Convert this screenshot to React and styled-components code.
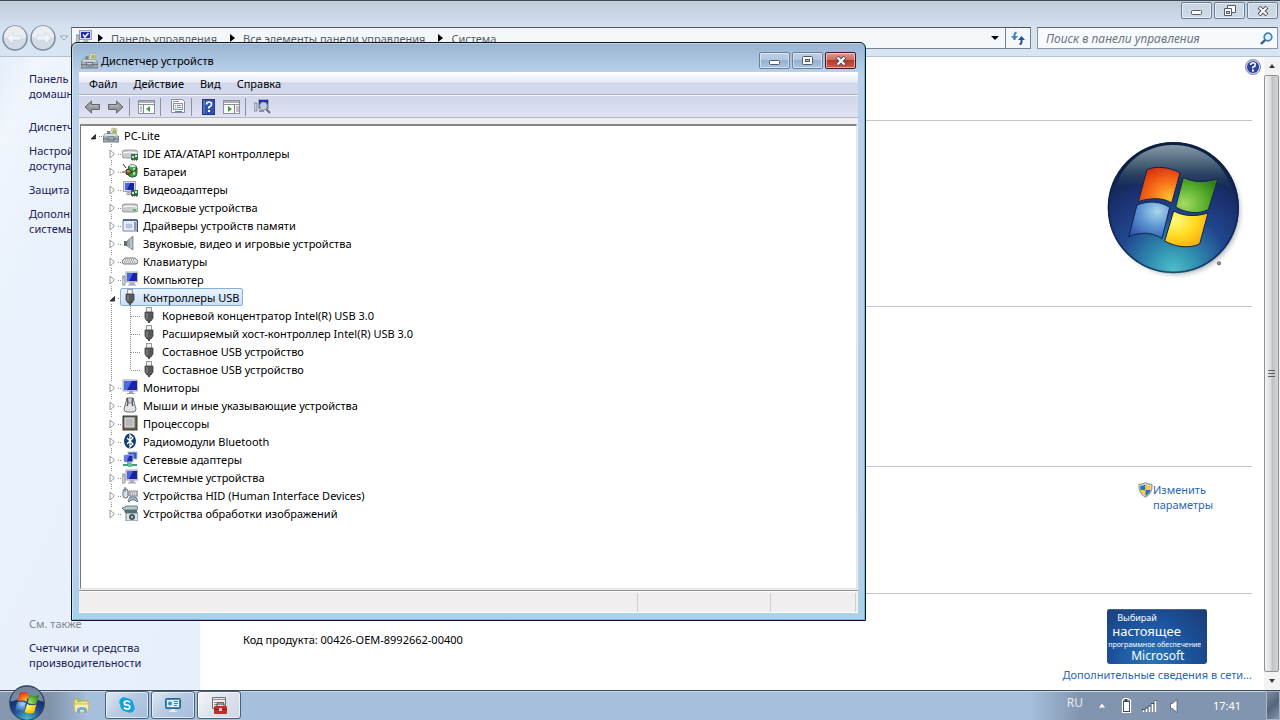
import React from 'react';
import styled, { createGlobalStyle, css } from 'styled-components';

const Global = createGlobalStyle`
  * { box-sizing: border-box; }
  body { margin: 0; }
  body, button, input { font-family: "Noto Sans", "Open Sans", sans-serif; font-size: 11px; line-height: 15px; }
  button { padding: 0; border: 0; background: none; color: inherit; cursor: default; }
  a { color: inherit; text-decoration: none; }
  svg { display: block; flex: none; }
  ul { list-style: none; margin: 0; padding: 0; }
`;

/* ---------- desktop and background window ---------- */

const Desktop = styled.div`
  position: relative;
  min-height: 100vh;
  display: flex;
  flex-direction: column;
  overflow: hidden;
  background: #fff;
  color: #000;
`;

const SystemWindow = styled.div`
  flex: 1;
  display: flex;
  flex-direction: column;
  border-top: 1px solid #454b55;
`;

const Chrome = styled.header`
  background: linear-gradient(#bfcbd9, #d6e2ef 28px, #d8e5f2);
  border-bottom: 1px solid #b4c2d0;
`;

const CaptionBar = styled.div`
  display: flex;
  justify-content: flex-end;
  gap: 2px;
  height: 26px;
  padding: 1px 2px 0 0;
`;

const CaptionButton = styled.button`
  display: flex;
  align-items: center;
  justify-content: center;
  width: 31px;
  height: 17px;
  border: 1px solid #6d7f97;
  border-radius: 2px;
  box-shadow: inset 0 0 0 1px rgba(255, 255, 255, 0.5);
  background: ${(p) => (p.$tone === 'close'
    ? 'linear-gradient(#dd9c90, #cc6a5a 48%, #b53a28 50%, #c8604a)'
    : p.$tone === 'glass'
      ? 'linear-gradient(#bdd0e6, #b0c6e0 48%, #96b1d0 50%, #abc5e0)'
      : 'linear-gradient(#cbd6e3, #cfdae7)')};
  ${(p) => p.$tone === 'close' && css`border-color: #44182a;`}
`;

const NavRow = styled.div`
  display: flex;
  align-items: flex-start;
  height: 29px;
  padding: 0 2px 0 1px;
`;

const NavArrows = styled.div`
  display: flex;
  align-items: center;
  width: 70px;
  height: 22px;
`;

const AddressBar = styled.nav`
  flex: 1;
  display: flex;
  align-items: center;
  height: 22px;
  border: 1px solid #76828f;
  border-top-color: #4e5864;
  background: #f4f8fb;
  color: #555d67;
  padding-left: 4px;
`;

const Place = styled.span`
  margin-right: 6px;
`;

const Crumb = styled.a`
  margin: 0 13px 0 8px;
  white-space: nowrap;
`;

const AddressEnd = styled.div`
  margin-left: auto;
  display: flex;
  align-self: stretch;
`;

const AddressButton = styled.button`
  display: flex;
  align-items: center;
  justify-content: center;
  width: ${(p) => p.$width}px;
  ${(p) => p.$divided && css`border-left: 1px solid #76828f;`}
`;

const SearchBox = styled.label`
  display: flex;
  align-items: center;
  width: 241px;
  height: 22px;
  margin-left: 6px;
  padding: 0 4px 0 8px;
  border: 1px solid #8a97a5;
  border-top-color: #5d6772;
  background: #f6fafd;
`;

const SearchInput = styled.input`
  flex: 1;
  min-width: 0;
  padding: 0;
  border: 0;
  outline: 0;
  background: none;
  font-size: 12px;
  font-style: italic;
  &::placeholder { color: #6e757d; opacity: 1; }
`;

const Body = styled.div`
  flex: 1;
  display: flex;
`;

const Sidebar = styled.aside`
  display: flex;
  flex-direction: column;
  gap: 9px;
  width: 200px;
  padding: 14px 10px 20px 29px;
  background: linear-gradient(115deg, #e3edf9, #f1f6fd 8%, #eaf2fc 22%, #e6effc);
  color: #1d2158;
`;

const SideLink = styled.a`
  ${(p) => p.$lead && css`margin-bottom: 9px;`}
`;

const SideHeading = styled.span`
  margin-top: auto;
  color: #83878d;
`;

const Main = styled.main`
  flex: 1;
  position: relative;
  padding: 0 12px 0 43px;
`;

const Section = styled.section`
  display: flex;
  justify-content: ${(p) => p.$justify || 'flex-end'};
  min-height: ${(p) => p.$height}px;
  padding-top: ${(p) => p.$top || 0}px;
  padding-right: ${(p) => p.$right || 0}px;
  ${(p) => !p.$last && css`border-bottom: 1px solid #c3c5c9;`}
`;

const ProductKey = styled.p`
  margin: 23px 0 0;
`;

const ShieldLink = styled.a`
  display: flex;
  align-items: flex-start;
  width: 114px;
  color: #2a68b0;
`;

const Genuine = styled.div`
  display: flex;
  flex-direction: column;
  align-items: center;
  gap: 3px;
  color: #2a68b0;
`;

const GenuineBadge = styled.a`
  display: flex;
  flex-direction: column;
  width: 100px;
  height: 55px;
  padding: 3px 1px 0;
  border-radius: 3px;
  overflow: hidden;
  white-space: nowrap;
  color: #fff;
  background: radial-gradient(circle at 45% 90%, #2a77b8, #1b519b 55%, #1b3b72);
  box-shadow: inset 0 1px 0 #46618a;
`;

const BadgeLine = styled.span`
  font-size: ${(p) => p.$size}px;
  line-height: ${(p) => p.$line}px;
  padding-left: ${(p) => p.$indent || 0}px;
`;

const HelpButton = styled.button`
  position: absolute;
  right: 3px;
  top: 2px;
`;

const Scrollbar = styled.div`
  display: flex;
  flex-direction: column;
  width: 16px;
  background: #f3f3f4;
`;

const ScrollArrow = styled.button`
  display: flex;
  align-items: center;
  justify-content: center;
  height: 18px;
`;

const ScrollThumb = styled.div`
  flex: 1;
  display: flex;
  align-items: center;
  justify-content: center;
  margin-right: 1px;
  border: 1px solid #8f9194;
  border-radius: 2px;
  background: linear-gradient(90deg, #f4f4f5, #dadbdd 45%, #c0c1c5 55%, #d4d5d8);
`;

/* ---------- device manager ---------- */

const Dialog = styled.section`
  position: absolute;
  left: 71px;
  right: 414px;
  top: 42px;
  padding: 0 7px 7px;
  border: 1px solid #10151c;
  border-radius: 6px 6px 0 0;
  background: linear-gradient(#98b4d1, #b9d1ea 30px, #b7d0e9 90%, #a5d2ec);
  box-shadow: inset 1px 1px 0 rgba(255, 255, 255, 0.4), inset -1px -1px 0 #62bdd8;
`;

const TitleBar = styled.header`
  display: flex;
  align-items: center;
  gap: 3px;
  height: 29px;
  padding: 6px 2px 0;
`;

const Title = styled.h1`
  margin: 0;
  font-size: 11px;
  font-weight: 400;
`;

const TitleButtons = styled.div`
  display: flex;
  gap: 2px;
  margin-left: auto;
`;

const Client = styled.div`
  background: #f0eeee;
  border-bottom: 1px solid #fff;
`;

const MenuBar = styled.nav`
  display: flex;
  gap: 16px;
  height: 23px;
  padding: 0 10px;
  border-bottom: 1px solid #aeb3c4;
  background: linear-gradient(#fff, #e6ebf6 45%, #d2d8ec 50%, #d3d9ec);
`;

const Toolbar = styled.div`
  display: flex;
  align-items: center;
  height: 23px;
  padding: 0 2px;
  border-top: 1px solid #f4f5fb;
  border-bottom: 1px solid #b4b6c3;
  background: linear-gradient(#d2d6ea, #dfe2f3);
`;

const ToolButton = styled.button`
  display: flex;
  align-items: center;
  justify-content: center;
  width: 23px;
  height: 20px;
`;

const ToolDivider = styled.span`
  width: 1px;
  height: 18px;
  margin: 0 5px 0 2px;
  background: #8d919c;
`;

const TreePane = styled.div`
  margin: 6px 1px 1px;
  min-height: 465px;
  border: 1px solid #dfe3e8;
  border-top: 2px solid #85878b;
  border-left: 1px solid #77797d;
  padding-left: 3px;
  background: #fff;
`;

const StatusBar = styled.footer`
  display: flex;
  justify-content: flex-end;
  height: 22px;
  border-top: 1px solid #8c8e8f;
  box-shadow: inset 0 1px 0 #fff;
`;

const StatusCell = styled.span`
  width: ${(p) => p.$width}px;
  margin-top: 2px;
  border-left: 1px solid #cfcfd1;
  ${(p) => p.$last && css`border-right: 1px solid #cfcfd1; margin-right: 2px;`}
`;

const Row = styled.li`
  display: flex;
  align-items: stretch;
  height: 18px;
`;

const vDots = 'repeating-linear-gradient(#8c8c8c 0 1px, transparent 1px 2px)';
const hDots = 'repeating-linear-gradient(90deg, #8c8c8c 0 1px, transparent 1px 2px)';

const Guide = styled.span`
  display: flex;
  align-items: center;
  justify-content: center;
  flex: none;
  width: 19px;
  padding-top: 2px;
  background-repeat: no-repeat;
  ${(p) => p.$kind === 'line' && css`
    background-image: ${vDots};
    background-size: 1px 100%;
    background-position: 8px 0;
  `}
  ${(p) => p.$kind === 'branch' && css`
    background-image: ${vDots}, ${hDots};
    background-size: 1px 100%, 10px 1px;
    background-position: 8px 0, 9px 10px;
  `}
  ${(p) => p.$kind === 'end' && css`
    background-image: ${vDots}, ${hDots};
    background-size: 1px 10px, 10px 1px;
    background-position: 8px 0, 9px 10px;
  `}
  ${(p) => p.$kind === 'stub' && css`
    background-image: ${hDots};
    background-size: 4px 1px;
    background-position: 15px 10px;
  `}
`;

const Toggle = styled.button`
  display: flex;
  align-items: center;
  justify-content: center;
  width: 11px;
  height: 12px;
  background: #fff;
`;

const Item = styled.span`
  display: flex;
  align-items: center;
  gap: 5px;
  white-space: nowrap;
  ${(p) => p.$selected && css`
    margin-left: -2px;
    padding: 0 3px 0 1px;
    border: 1px solid #86b0dc;
    border-radius: 2px;
    background: linear-gradient(#e9f2fc, #cbe0f8);
  `}
`;

/* ---------- taskbar ---------- */

const Taskbar = styled.footer`
  position: relative;
  display: flex;
  align-items: stretch;
  height: 30px;
  border-top: 1px solid #3f4b5c;
  box-shadow: inset 0 1px 0 #c9d6e6;
  background: linear-gradient(90deg, #8699b1, #8093ab 50px, #a6bfdc 88px, #a6bfdc calc(100% - 250px), #8195ae calc(100% - 200px), #8195ae);
`;

const StartButton = styled.button`
  flex: none;
  width: 36px;
  margin: -6px 14px 0 9px;
  align-self: flex-start;
`;

const TaskButton = styled.button`
  display: flex;
  align-items: center;
  justify-content: center;
  width: 44px;
  height: 28px;
  margin: 0 2px 0 0;
  ${(p) => p.$open && css`
    border: 1px solid #4b607b;
    border-radius: 3px;
    box-shadow: inset 0 0 0 1px rgba(255, 255, 255, 0.6);
    background: linear-gradient(135deg, #dfe9f5, #b5c9e2 50%, #a5bddb);
  `}
  ${(p) => p.$active && css`background: linear-gradient(135deg, #f4f6f9, #dde3ed 50%, #cfd7e4);`}
`;

const Tray = styled.div`
  display: flex;
  align-items: center;
  margin-left: auto;
  color: #fff;
`;

const Language = styled.button`
  align-self: flex-start;
  margin: 4px 15px 0 0;
  font-size: 12px;
  color: #e5ebf3;
`;

const TrayButton = styled.button`
  display: flex;
  margin-right: ${(p) => p.$gap}px;
`;

const Clock = styled.time`
  width: 53px;
`;

const ShowDesktop = styled.button`
  align-self: stretch;
  width: 14px;
  border: 1px solid #a6b4c6;
  background: linear-gradient(135deg, #7c8da3, #54657c 50%, #8495ab);
`;

/* ---------- drawings ---------- */

const Svg = ({ s = 16, w = s, h = s, box, children }) => (
  <svg width={w} height={h} viewBox={box || `0 0 ${w} ${h}`} aria-hidden="true">{children}</svg>
);

const screen = (
  <>
    <rect x="4" y="1" width="12" height="10" fill="#d5d9df" stroke="#a3a9b3" />
    <rect x="5" y="2" width="10" height="8" fill="#1823a8" />
    <path d="M5 2h6L7 10H5z" fill="#4868e0" />
    <path d="M8 11h4l1 3H7z" fill="#aeb4bd" />
    <path d="M6 14h8" stroke="#9ba1aa" />
  </>
);

const drive = (
  <>
    <path d="M2 5h12l2 4H0z" fill="#e9ebec" />
    <path d="M0 8q0-3 3-3h10q3 0 3 3v3q0 2-3 2H3q-3 0-3-2z" fill="#c9cccf" stroke="#86898d" strokeWidth=".8" />
    <path d="M1 8q7-2 14 0" stroke="#fff" fill="none" />
    <rect x="11" y="10" width="3" height="2" fill="#5bb65f" />
  </>
);

const chip = (
  <>
    <rect x="9" y="9" width="7" height="6" fill="#3b6b49" />
    <path d="M10 11h2v2h-2zM13 10h2v2h-2z" fill="#cdeed0" />
    <path d="M10 15.500h5" stroke="#a59560" strokeDasharray="1 1" />
  </>
);

const shapes = {
  pc: (
    <>
      <path d="M9 1l5 1-1 6H7z" fill="#f6f1c7" stroke="#a8a67c" strokeWidth=".7" />
      <path d="M10 2l3 1v3H9z" fill="#9bb871" />
      <path d="M2 7h11l3 3v5H0v-5z" fill="#a5afb7" stroke="#57626b" strokeWidth=".8" />
      <path d="M2 7h11l2 2H1z" fill="#d6dde2" />
      <path d="M0 12h16M5 10h6v3H5z" stroke="#57626b" fill="#d6dde2" strokeWidth=".8" />
      <path d="M4 4h3v3H4z" fill="#77838d" />
    </>
  ),
  ide: <>{drive}{chip}</>,
  disk: drive,
  battery: (
    <>
      <rect x="6" y="2" width="9" height="12" rx="4" fill="#35a047" stroke="#23642d" />
      <ellipse cx="10.500" cy="3" rx="3.500" ry="1.500" fill="#e2efe2" stroke="#51705a" strokeWidth=".6" />
      <path d="M12 5v7" stroke="#a2e39a" strokeWidth="2" />
      <path d="M1 1l3 4" stroke="#333" />
      <path d="M0 9h3M4 7l3-1 3 3-3 3-3-1zM10 9q5-1 5-4" fill="#75612f" stroke="#3c3622" strokeWidth="1" />
      <path d="M5 8h3" stroke="#d8c37c" />
    </>
  ),
  video: (
    <>
      <rect x="1.500" y="0.500" width="12" height="10" fill="#d5d9df" stroke="#a3a9b3" />
      <rect x="3" y="2" width="9" height="7" fill="#1823a8" />
      <path d="M3 2h5L5 9H3z" fill="#4868e0" />
      <path d="M5 11h4l1 3H4z" fill="#aeb4bd" />
      {chip}
    </>
  ),
  memory: (
    <>
      <path d="M1 3h14v11H1z" fill="#dfe4ef" stroke="#7784a5" />
      <path d="M1 3h14" stroke="#57668f" strokeWidth="2" />
      <rect x="3" y="6" width="8" height="6" fill="#b6c1da" stroke="#fff" />
      <path d="M13 5v8M15.500 3v12" stroke="#3f4c72" />
    </>
  ),
  sound: (
    <>
      <path d="M2 6h3v5H2z" fill="#5e6a73" />
      <path d="M5 6l6-5v14l-6-4z" fill="#9aa5ad" stroke="#7e8a93" strokeWidth=".8" />
      <path d="M9 4v9" stroke="#dce2e6" />
    </>
  ),
  keyboard: (
    <>
      <path d="M3 5h10l3 3q0 3-2 3H2q-2 0-2-3z" fill="#dcdedf" stroke="#66696c" strokeWidth=".9" />
      <path d="M3 7h10M2 9h12" stroke="#888b8e" strokeDasharray="1 1" />
    </>
  ),
  computer: (
    <>
      {screen}
      <path d="M0 5h3v9H0z" fill="#cfd4d9" stroke="#828991" strokeWidth=".8" />
      <path d="M1 7h1" stroke="#58a35c" />
    </>
  ),
  usb: (
    <>
      <rect x="5.500" y="0.500" width="5" height="5" fill="#eceded" stroke="#999c9f" />
      <path d="M4 5h8v6l-2 3H6l-2-3z" fill="#56595c" stroke="#3c3e40" strokeWidth=".8" />
      <path d="M6 6v6" stroke="#8f9295" />
      <path d="M7 13h2v3H7z" fill="#4a4d50" />
    </>
  ),
  monitor: (
    <>
      <rect x="1" y="1" width="15" height="11" fill="#d8dce2" stroke="#a3a9b3" />
      <rect x="2" y="2" width="13" height="9" fill="#1823a8" />
      <path d="M2 2h8L5 11H2z" fill="#4b6be2" />
      <path d="M7 12h4v2H7zM5 14h8v1H5z" fill="#9da3ac" />
    </>
  ),
  mouse: (
    <>
      <path d="M5 1h6l3 11q0 3-3 3H5q-3 0-3-3z" fill="#e1e3e5" stroke="#6f7478" />
      <path d="M5 1l1 5-1 3M11 1l-1 5 1 3" fill="none" stroke="#55595d" strokeWidth="1.500" />
      <path d="M7 1h2v5H7z" fill="#f5f5f5" stroke="#777b7f" strokeWidth=".6" />
    </>
  ),
  cpu: (
    <>
      <rect x="1" y="1" width="14" height="14" fill="#65625c" stroke="#3b3935" />
      <path d="M1 15.500h14M15.500 1v14" stroke="#c7a75a" strokeDasharray="1 1" />
      <rect x="3" y="3" width="9" height="9" fill="#b9b9b7" stroke="#e3e3e1" />
    </>
  ),
  bluetooth: (
    <>
      <ellipse cx="8" cy="8" rx="6" ry="7.500" fill="#0f3e73" />
      <path d="M5 5l6 6-3 3V2l3 3-6 6" fill="none" stroke="#fff" strokeWidth="1.300" />
    </>
  ),
  network: (
    <>
      <rect x="6" y="1" width="9" height="7" fill="#3a56cc" stroke="#b5bcc8" />
      <rect x="2" y="4" width="9" height="7" fill="#1a28ae" stroke="#ccd2dc" />
      <path d="M3 5h4l-2 5H3z" fill="#5b7aec" />
      <path d="M5 11h4v2H5z" fill="#9aa3ad" />
      <path d="M1 14h14" stroke="#3aa66e" strokeWidth="2" />
      <path d="M6 12h4v4H6z" fill="#65c491" />
    </>
  ),
  hid: (
    <>
      <rect x="1" y="2" width="5" height="9" rx="2.500" fill="#dfe2e5" stroke="#5d666e" />
      <path d="M3 0v5" stroke="#5d666e" />
      <path d="M7 4h9v5H7z" fill="#d7dade" stroke="#6f767d" strokeWidth=".8" />
      <path d="M8 6h7M8 8h7" stroke="#7f868d" strokeDasharray="1 1" />
      <path d="M6 14l2-4h6l2 4-1 1-2-2H9l-2 2z" fill="#a4b8cb" stroke="#4b6177" strokeWidth=".8" />
    </>
  ),
  imaging: (
    <>
      <path d="M0 3l5-2h10l1 3-4 1H2z" fill="#b9c8cc" stroke="#54676d" strokeWidth=".8" />
      <path d="M2 5h13v3H3z" fill="#4f7178" />
      <path d="M4 8h12v8H4z" fill="#dfe4e6" stroke="#59676c" strokeWidth=".8" />
      <circle cx="10" cy="12" r="3" fill="#3e5965" />
      <circle cx="10" cy="12" r="1.200" fill="#9fc3d2" />
    </>
  ),
  system: (
    <>
      <rect x="3.500" y="0.500" width="12" height="9" fill="#d5d9df" stroke="#9aa1ac" />
      <rect x="5" y="2" width="9" height="6" fill="#1c2bb0" />
      <path d="M7 4.500l2 2.500 3.500-4" fill="none" stroke="#fff" strokeWidth="1.500" />
      <path d="M8 10h4l1 3H6z" fill="#aeb4bd" />
      <path d="M0 5h3v9H0z" fill="#c5cbd2" stroke="#7b828b" strokeWidth=".8" />
    </>
  ),
};

const Icon = ({ name, s = 16 }) => <Svg s={s} box="0 0 16 16">{shapes[name]}</Svg>;

const Minimize = () => (
  <Svg w={11} h={9}><rect x="0.500" y="4.500" width="10" height="4" rx="1" fill="#fff" stroke="#525b69" /></Svg>
);
const Maximize = () => (
  <Svg w={11} h={9}>
    <rect x="0.500" y="0.500" width="10" height="8" rx="1" fill="#fff" stroke="#525b69" />
    <rect x="3.500" y="3.500" width="4" height="2" fill="#a9bed6" stroke="#525b69" />
  </Svg>
);
const Restore = () => (
  <Svg w={12} h={11}>
    <path d="M3.500.500h8v7h-8z" fill="#fff" stroke="#525b69" />
    <path d="M.500 3.500h7v7h-7z" fill="#fff" stroke="#525b69" />
    <rect x="2.500" y="6.500" width="3" height="2" fill="#cdd7e4" stroke="#525b69" />
  </Svg>
);
const Cross = () => (
  <Svg w={12} h={10}>
    <path d="M2 1l8 8M10 1L2 9" stroke="#525061" strokeWidth="4" />
    <path d="M2.500 1.500l7 7M9.500 1.500l-7 7" stroke="#fff" strokeWidth="2" />
  </Svg>
);

const NavDisc = ({ dir }) => (
  <Svg w={28} h={28}>
    <circle cx="14" cy="14" r="12" fill="#d3dce6" stroke="#7d8b9c" strokeWidth="1.500" />
    <path d="M3 13a11 11 0 0 1 22 0q-11 5-22 0z" fill="#e9eef3" />
    <path d={dir === 'back' ? 'M6 14l6-6v4h8v4h-8v4z' : 'M22 14l-6-6v4H8v4h8v4z'} fill="#f1f5f8" stroke="#cdd6df" strokeWidth=".8" />
  </Svg>
);

const Caret = () => <Svg w={5} h={8}><path d="M0 0l5 4-5 4z" fill="#000" /></Svg>;

const Flag = () => (
  <>
    <path d="M200 120C225 108 270 112 299 130L274 220C250 205 215 202 174 216Z" fill="url(#red)" />
    <path d="M309 143C340 160 375 158 413 147L384 240C355 255 315 250 286 232Z" fill="url(#green)" />
    <path d="M170 226C205 212 240 215 268 233L245 327C215 308 185 305 145 321Z" fill="url(#blue)" />
    <path d="M280 244C310 260 345 262 383 250L358 343C325 358 285 352 253 334Z" fill="url(#yellow)" />
  </>
);

const Gradients = () => (
  <defs>
    <radialGradient id="orb" cx=".5" cy=".98" r=".9">
      <stop offset="0" stopColor="#4fbfc9" /><stop offset=".22" stopColor="#2f8cae" />
      <stop offset=".48" stopColor="#21478f" /><stop offset=".75" stopColor="#1a2f6e" /><stop offset="1" stopColor="#0d1f44" />
    </radialGradient>
    <linearGradient id="gloss" x1="0" y1="0" x2="0" y2="1">
      <stop offset="0" stopColor="#8799a6" /><stop offset=".5" stopColor="#3f5770" /><stop offset="1" stopColor="#1a2c50" stopOpacity=".3" />
    </linearGradient>
    <radialGradient id="red" cx=".75" cy=".85" r=".9">
      <stop offset="0" stopColor="#ffc02c" /><stop offset=".5" stopColor="#f9701a" /><stop offset="1" stopColor="#d8330f" />
    </radialGradient>
    <radialGradient id="green" cx=".2" cy=".75" r=".9">
      <stop offset="0" stopColor="#a5dc62" /><stop offset=".6" stopColor="#55ab2b" /><stop offset="1" stopColor="#2f7d1b" />
    </radialGradient>
    <radialGradient id="blue" cx=".7" cy=".25" r=".9">
      <stop offset="0" stopColor="#a9d6f0" /><stop offset=".5" stopColor="#5a92d0" /><stop offset="1" stopColor="#2e4fa8" />
    </radialGradient>
    <radialGradient id="yellow" cx=".25" cy=".25" r=".95">
      <stop offset="0" stopColor="#fffb7a" /><stop offset=".5" stopColor="#ffd91f" /><stop offset="1" stopColor="#f59b13" />
    </radialGradient>
    <radialGradient id="shade" cx=".5" cy=".5" r=".5">
      <stop offset=".88" stopColor="#8e949c" stopOpacity=".7" /><stop offset="1" stopColor="#fff" stopOpacity="0" />
    </radialGradient>
  </defs>
);

const WindowsLogo = () => (
  <Svg w={140} h={140} box="80 37 420 420">
    <Gradients />
    <circle cx="288" cy="244" r="208" fill="url(#shade)" />
    <circle cx="279" cy="234" r="197" fill="url(#orb)" />
    <path d="M104 180C124 100 195 46 279 46S434 100 454 180C420 145 350 170 279 170S140 145 104 180Z" fill="url(#gloss)" />
    <circle cx="279" cy="234" r="194" fill="none" stroke="#0d2144" strokeWidth="5" opacity=".7" />
    <g stroke="#10234a" strokeWidth="3"><Flag /></g>
    <circle cx="416" cy="401" r="5" fill="#999" stroke="#444" strokeWidth="2" />
  </Svg>
);

const StartOrb = () => (
  <Svg w={36} h={36} box="79 34 400 400">
    <circle cx="279" cy="234" r="192" fill="url(#orb)" stroke="#32475f" strokeWidth="12" />
    <path d="M95 220C110 105 190 52 279 52S448 105 463 220Q279 150 95 220Z" fill="#a8bccb" opacity=".65" />
    <Flag />
  </Svg>
);

const Arrow = ({ flip }) => (
  <Svg w={17} h={14}>
    <path d={flip ? 'M16 7L9.500 1v3.500h-8v5h8V13z' : 'M1 7l6.500-6v3.500h8v5h-8V13z'} fill="#96989c" stroke="#65676c" />
    <path d={flip ? 'M3 6h9' : 'M5 6h9'} stroke="#c3c5c8" />
  </Svg>
);

const Pane = ({ flip }) => (
  <Svg w={17} h={14}>
    <rect x="0.500" y="0.500" width="16" height="13" fill="#fff" stroke="#8b8f98" />
    <path d="M1 2h15" stroke="#a9aeb8" strokeWidth="2" />
    <path d="M1 4.500h15" stroke="#8b8f98" />
    <path d={flip ? 'M11.500 5v8M13 7h3M13 9h3M13 11h3' : 'M5.500 5v8M2 7h2M2 9h2M2 11h2'} stroke="#7d818a" />
    <path d={flip ? 'M5 6v6l4-3z' : 'M12 6v6L8 9z'} fill="#3e9c42" />
  </Svg>
);

const Properties = () => (
  <Svg w={16} h={15}>
    <path d="M1.500.500h11l2 2v11h-13z" fill="#fbfbfc" stroke="#898d94" />
    <rect x="3.500" y="4.500" width="9" height="6" fill="#eef2f7" stroke="#8a97a8" />
    <path d="M5 6.500h1M7 6.500h4M5 8.500h1M7 8.500h4M3 2.500h6" stroke="#8a97a8" />
    <path d="M5 12.500h7" stroke="#3c9aa8" />
  </Svg>
);

const QuestionMark = () => (
  <Svg w={13} h={16}>
    <rect x="0.500" y="0.500" width="12" height="15" fill="#3253ac" stroke="#24397c" />
    <path d="M2 1v14" stroke="#7089cf" />
    <path d="M4.500 5.500q0-2.500 2.500-2.500t2.500 2-1.500 2.500-1 2" fill="none" stroke="#fff" strokeWidth="1.700" />
    <rect x="6" y="11" width="2" height="2" fill="#fff" />
  </Svg>
);

const Scan = () => (
  <Svg w={17} h={16}>
    <rect x="4.500" y="0.500" width="10" height="9" fill="#1c2bb0" stroke="#a5abb7" />
    <path d="M0 4h3v8H0z" fill="#c5cbd2" stroke="#7b828b" strokeWidth=".8" />
    <circle cx="9.500" cy="7" r="4" fill="#dbe8f5" fillOpacity=".85" stroke="#75899f" />
    <path d="M12 10l4 4" stroke="#676d76" strokeWidth="2" />
    <path d="M5 12h5" stroke="#8d939c" strokeWidth="2" />
  </Svg>
);

const HelpDisc = () => (
  <Svg w={16} h={16}>
    <circle cx="8" cy="8" r="7.500" fill="#c9d0ea" stroke="#7f88ad" />
    <circle cx="8" cy="8" r="6" fill="#2c43a0" />
    <path d="M5.700 6q0-2.300 2.300-2.300T10.300 5.600 8.800 7.800 8 9.400" fill="none" stroke="#fff" strokeWidth="1.600" />
    <rect x="7" y="10.500" width="2" height="2" fill="#fff" />
  </Svg>
);

const Shield = () => (
  <Svg w={15} h={16} box="0 0 15 16">
    <path d="M7.500.700Q10 2.300 14 2.300q.8 9-6.500 13Q.200 11.300 1 2.300 5 2.300 7.500.700z" fill="#d9dcdf" stroke="#82888f" />
    <path d="M7.500 2.500v5.500H2.400L2.300 3.700Q5.500 3.700 7.500 2.500z" fill="#2c6fc0" />
    <path d="M7.500 2.500q2 1.200 5.200 1.200L12.600 8H7.500z" fill="#f2cf3a" />
    <path d="M2.400 8h5.100v5.900Q3.200 11.500 2.400 8z" fill="#f2cf3a" />
    <path d="M12.600 8H7.500v5.900q4.300-2.400 5.100-5.900z" fill="#2c6fc0" />
  </Svg>
);

const Closed = () => (
  <Svg w={7} h={10}><path d="M1 1l4.500 4L1 9z" fill="#fff" stroke="#96989b" /></Svg>
);
const Opened = () => (
  <Svg w={7} h={7}><path d="M5.500 1.500v4.500h-4.500z" fill="#3a3a3a" stroke="#222" strokeWidth=".8" /></Svg>
);

/* ---------- content ---------- */

const devices = [
  { icon: 'ide', label: 'IDE ATA/ATAPI контроллеры' },
  { icon: 'battery', label: 'Батареи' },
  { icon: 'video', label: 'Видеоадаптеры' },
  { icon: 'disk', label: 'Дисковые устройства' },
  { icon: 'memory', label: 'Драйверы устройств памяти' },
  { icon: 'sound', label: 'Звуковые, видео и игровые устройства' },
  { icon: 'keyboard', label: 'Клавиатуры' },
  { icon: 'computer', label: 'Компьютер' },
  {
    icon: 'usb',
    label: 'Контроллеры USB',
    selected: true,
    children: [
      'Корневой концентратор Intel(R) USB 3.0',
      'Расширяемый хост-контроллер Intel(R) USB 3.0',
      'Составное USB устройство',
      'Составное USB устройство',
    ],
  },
  { icon: 'monitor', label: 'Мониторы' },
  { icon: 'mouse', label: 'Мыши и иные указывающие устройства' },
  { icon: 'cpu', label: 'Процессоры' },
  { icon: 'bluetooth', label: 'Радиомодули Bluetooth' },
  { icon: 'network', label: 'Сетевые адаптеры' },
  { icon: 'computer', label: 'Системные устройства' },
  { icon: 'hid', label: 'Устройства HID (Human Interface Devices)' },
  { icon: 'imaging', label: 'Устройства обработки изображений' },
];

function Device({ device, last }) {
  return (
    <>
      <Row role="treeitem">
        <Guide />
        <Guide $kind={last ? 'end' : 'branch'}>
          <Toggle aria-label={device.label}>{device.children ? <Opened /> : <Closed />}</Toggle>
        </Guide>
        <Item $selected={device.selected}><Icon name={device.icon} />{device.label}</Item>
      </Row>
      {device.children?.map((label, i) => (
        <Row role="treeitem" key={i}>
          <Guide />
          <Guide $kind="line" />
          <Guide $kind={i === device.children.length - 1 ? 'end' : 'branch'} />
          <Item><Icon name="usb" />{label}</Item>
        </Row>
      ))}
    </>
  );
}

function DeviceManager() {
  return (
    <Dialog role="dialog" aria-labelledby="dm-title">
      <TitleBar>
        <Icon name="pc" s={17} />
        <Title id="dm-title">Диспетчер устройств</Title>
        <TitleButtons>
          <CaptionButton $tone="glass" aria-label="Свернуть"><Minimize /></CaptionButton>
          <CaptionButton $tone="glass" aria-label="Развернуть"><Maximize /></CaptionButton>
          <CaptionButton $tone="close" aria-label="Закрыть"><Cross /></CaptionButton>
        </TitleButtons>
      </TitleBar>
      <Client>
        <MenuBar>
          {['Файл', 'Действие', 'Вид', 'Справка'].map((m) => <button key={m}>{m}</button>)}
        </MenuBar>
        <Toolbar>
          <ToolButton aria-label="Назад"><Arrow /></ToolButton>
          <ToolButton aria-label="Вперед"><Arrow flip /></ToolButton>
          <ToolDivider />
          <ToolButton aria-label="Дерево консоли"><Pane /></ToolButton>
          <ToolDivider />
          <ToolButton aria-label="Свойства"><Properties /></ToolButton>
          <ToolDivider />
          <ToolButton aria-label="Справка"><QuestionMark /></ToolButton>
          <ToolButton aria-label="Панель действий"><Pane flip /></ToolButton>
          <ToolDivider />
          <ToolButton aria-label="Обновить конфигурацию оборудования"><Scan /></ToolButton>
        </Toolbar>
        <TreePane>
          <ul role="tree">
            <Row role="treeitem">
              <Guide $kind="stub"><Toggle aria-label="PC-Lite"><Opened /></Toggle></Guide>
              <Item><Icon name="pc" />PC-Lite</Item>
            </Row>
            {devices.map((d, i) => (
              <Device key={d.label} device={d} last={i === devices.length - 1} />
            ))}
          </ul>
        </TreePane>
        <StatusBar>
          <StatusCell $width={133} />
          <StatusCell $width={86} $last />
        </StatusBar>
      </Client>
    </Dialog>
  );
}

function SystemProperties() {
  return (
    <SystemWindow>
      <Chrome>
        <CaptionBar>
          <CaptionButton aria-label="Свернуть"><Minimize /></CaptionButton>
          <CaptionButton aria-label="Восстановить"><Restore /></CaptionButton>
          <CaptionButton aria-label="Закрыть"><Cross /></CaptionButton>
        </CaptionBar>
        <NavRow>
          <NavArrows>
            <button aria-label="Назад"><NavDisc dir="back" /></button>
            <button aria-label="Вперед"><NavDisc /></button>
            <Svg w={12} h={6}><path d="M3 1h8L7 5z" fill="#e6edf5" stroke="#98a8b9" /></Svg>
          </NavArrows>
          <AddressBar>
            <Place><Icon name="system" /></Place>
            <Caret />
            <Crumb href="#panel">Панель управления</Crumb>
            <Caret />
            <Crumb href="#all">Все элементы панели управления</Crumb>
            <Caret />
            <Crumb href="#system">Система</Crumb>
            <AddressEnd>
              <AddressButton $width={21} aria-label="Журнал"><Svg w={8} h={4}><path d="M0 0h8L4 4z" fill="#000" /></Svg></AddressButton>
              <AddressButton $width={25} $divided aria-label="Обновить">
                <Svg w={14} h={14}>
                  <path d="M3.500 9V4q0-2 2-2.500" fill="none" stroke="#3c86c4" strokeWidth="2" />
                  <path d="M0 5h7L3.500 9z" fill="#3c86c4" />
                  <path d="M10.500 6v5q0 2-2 2.500" fill="none" stroke="#23579a" strokeWidth="2" />
                  <path d="M7 9h7l-3.500-4z" fill="#23579a" />
                </Svg>
              </AddressButton>
            </AddressEnd>
          </AddressBar>
          <SearchBox>
            <SearchInput type="text" aria-label="Поиск" placeholder="Поиск в панели управления" />
            <Svg w={13} h={13}>
              <circle cx="8" cy="5" r="3.800" fill="#e4f1fb" stroke="#3e82bc" strokeWidth="1.700" />
              <path d="M5.200 7.800L1 12" stroke="#2c5f95" strokeWidth="2.400" />
            </Svg>
          </SearchBox>
        </NavRow>
      </Chrome>
      <Body>
        <Sidebar>
          <SideLink href="#home" $lead>Панель управления — домашняя страница</SideLink>
          <SideLink href="#devices">Диспетчер устройств</SideLink>
          <SideLink href="#remote">Настройка удаленного доступа</SideLink>
          <SideLink href="#protection">Защита системы</SideLink>
          <SideLink href="#advanced">Дополнительные параметры системы</SideLink>
          <SideHeading>См. также</SideHeading>
          <SideLink href="#performance">Счетчики и средства производительности</SideLink>
        </Sidebar>
        <Main>
          <HelpButton aria-label="Справка"><HelpDisc /></HelpButton>
          <Section $height={64} />
          <Section $height={186} $top={21} $right={5}><WindowsLogo /></Section>
          <Section $height={160} />
          <Section $height={127} $top={15}>
            <ShieldLink href="#change"><Shield /><span>Изменить параметры</span></ShieldLink>
          </Section>
          <Section $height={96} $top={15} $justify="space-between" $last>
            <ProductKey>Код продукта: 00426-OEM-8992662-00400</ProductKey>
            <Genuine>
              <GenuineBadge href="#genuine">
                <BadgeLine $size={9} $line={12} $indent={9}>Выбирай</BadgeLine>
                <BadgeLine $size={13} $line={14} $indent={4}>настоящее</BadgeLine>
                <BadgeLine $size={7} $line={13}>программное обеспечение</BadgeLine>
                <BadgeLine $size={12} $line={9} $indent={23}>Microsoft</BadgeLine>
              </GenuineBadge>
              <a href="#online">Дополнительные сведения в сети...</a>
            </Genuine>
          </Section>
        </Main>
        <Scrollbar>
          <ScrollArrow aria-label="Вверх"><Svg w={6} h={4}><path d="M0 4l3-4 3 4z" fill="#3c3c3c" /></Svg></ScrollArrow>
          <ScrollThumb><Svg w={7} h={8}><path d="M0 .500h7M0 3.500h7M0 6.500h7" stroke="#5e6064" /></Svg></ScrollThumb>
          <ScrollArrow aria-label="Вниз"><Svg w={6} h={4}><path d="M0 0l3 4 3-4z" fill="#3c3c3c" /></Svg></ScrollArrow>
        </Scrollbar>
      </Body>
    </SystemWindow>
  );
}

function TaskPanel() {
  return (
    <Taskbar>
      <StartButton aria-label="Пуск"><StartOrb /></StartButton>
      <TaskButton aria-label="Проводник">
        <Svg w={17} h={17}>
          <path d="M1 3l5-1 2 2h7l1 9H2z" fill="#f1e08f" stroke="#c9ad4b" />
          <path d="M4 1h4v4H4z" fill="#8fc173" />
          <path d="M1 7h15l-1 8H2z" fill="#f8eeb0" stroke="#d4bb5c" />
          <path d="M4 16v-3q0-3 5-3t5 3v3h-3v-3H7v3z" fill="#74acd8" />
        </Svg>
      </TaskButton>
      <TaskButton $open aria-label="Skype">
        <Svg w={16} h={16}>
          <circle cx="5" cy="5" r="4.700" fill="#12a2dc" /><circle cx="11" cy="11" r="4.700" fill="#12a2dc" />
          <circle cx="8" cy="8" r="6.800" fill="#12a2dc" />
          <path d="M11 5.500Q10 4 8 4 5.300 4 5.300 6T8 8t2.800 2T8 12Q6 12 5 10.500" fill="none" stroke="#fff" strokeWidth="1.700" />
        </Svg>
      </TaskButton>
      <TaskButton $open aria-label="Система">
        <Svg w={16} h={16}>
          <rect x="0.500" y="1.500" width="15" height="10" rx="1" fill="#3d8cc4" stroke="#2c6590" />
          <rect x="2" y="3" width="12" height="7" fill="#dff0f8" />
          <circle cx="5" cy="6.500" r="2" fill="#3d8cc4" />
          <path d="M9 4.500h4M9 6.500h4M9 8.500h3" stroke="#4b7f9f" />
          <path d="M6 12h4v2H6zM4 14h8v1H4z" fill="#e4eaf0" />
        </Svg>
      </TaskButton>
      <TaskButton $open $active aria-label="Диспетчер устройств">
        <Svg w={17} h={17}>
          <path d="M1.500.500h13v11h-13z" fill="#ececec" stroke="#6d7074" />
          <path d="M2 2.500h12M3 5.500h10M3 7.500h10" stroke="#8b8e93" />
          <path d="M6 9V7q0-1 1-1h5q1 0 1 1v2" fill="none" stroke="#84201a" />
          <rect x="3" y="9" width="13" height="8" rx="1" fill="#c32f28" />
          <path d="M3 12.500h13" stroke="#84201a" /><rect x="8" y="11" width="3" height="3" fill="#e9c9c4" />
        </Svg>
      </TaskButton>
      <Tray>
        <Language>RU</Language>
        <TrayButton $gap={15} aria-label="Скрытые значки"><Svg w={8} h={5}><path d="M0 5l4-5 4 5z" fill="#f2f5f9" stroke="#53657b" strokeWidth=".5" /></Svg></TrayButton>
        <TrayButton $gap={10} aria-label="Батарея">
          <Svg w={11} h={15}>
            <path d="M3 .500h4V2h2.500v12.500h-8V2H3z" fill="#33445a" stroke="#fff" strokeWidth="1.200" />
            <rect x="3" y="4" width="5" height="9" fill="#fff" />
          </Svg>
        </TrayButton>
        <TrayButton $gap={12} aria-label="Сеть">
          <Svg w={16} h={12}>
            <path d="M1.500 9v3M4.500 7.500V12M7.500 5.500V12M10.500 3V12M13.500 .500V12" stroke="#33445a" strokeWidth="3" />
            <path d="M1.500 10v2M4.500 8.500V12M7.500 6.500V12M10.500 4V12M13.500 1V12" stroke="#fff" strokeWidth="2" />
          </Svg>
        </TrayButton>
        <TrayButton $gap={35} aria-label="Громкость">
          <Svg w={8} h={14}><path d="M.500 4.500h2l4.500-4v13l-4.500-4h-2z" fill="#fff" stroke="#4b5c72" strokeWidth=".8" /></Svg>
        </TrayButton>
        <Clock>17:41</Clock>
        <ShowDesktop aria-label="Показать рабочий стол" />
      </Tray>
    </Taskbar>
  );
}

export default function App() {
  return (
    <Desktop>
      <Global />
      <SystemProperties />
      <TaskPanel />
      <DeviceManager />
    </Desktop>
  );
}
